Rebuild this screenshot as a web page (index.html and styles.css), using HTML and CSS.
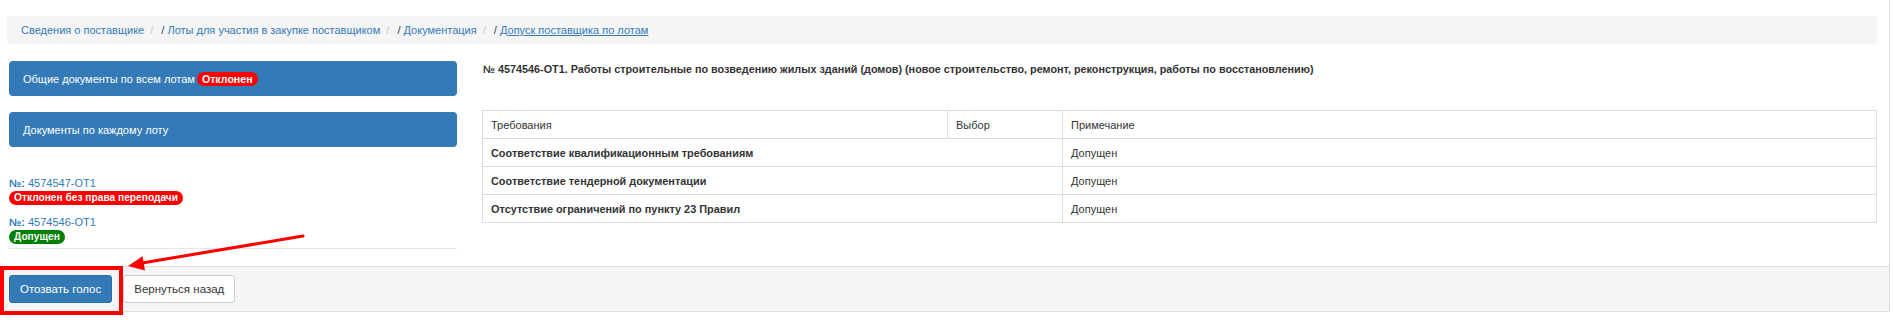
FILE: index.html
```html
<!DOCTYPE html>
<html lang="ru">
<head>
  <meta charset="UTF-8">
  <title>Допуск поставщика по лотам</title>
  <link rel="stylesheet" href="styles.css">
</head>
<body>

<div class="panel">
  <ol class="breadcrumb">
    <li><a href="#">Сведения о поставщике</a></li>
    <li><span class="slash">/</span> <a href="#">Лоты для участия в закупке поставщиком</a></li>
    <li><span class="slash">/</span> <a href="#">Документация</a></li>
    <li><span class="slash">/</span> <a href="#" class="current">Допуск поставщика по лотам</a></li>
  </ol>

  <div class="panel-body">
    <div class="side">
      <a href="#" class="doc-btn">Общие документы по всем лотам <span class="badge red">Отклонен</span></a>
      <a href="#" class="doc-btn">Документы по каждому лоту</a>

      <div class="lots">
        <div class="lot">
          <a href="#" class="lot-no"><b>№:</b> 4574547-OT1</a>
          <span class="badge red">Отклонен без права переподачи</span>
        </div>
        <div class="lot">
          <a href="#" class="lot-no"><b>№:</b> 4574546-OT1</a>
          <span class="badge green">Допущен</span>
        </div>
      </div>
      <hr>
    </div>

    <div class="main">
      <h4 class="lot-title">№ 4574546-OT1. Работы строительные по возведению жилых зданий (домов) (новое строительство, ремонт, реконструкция, работы по восстановлению)</h4>
      <table class="req">
        <thead>
          <tr>
            <th class="c1">Требования</th>
            <th class="c2">Выбор</th>
            <th>Примечание</th>
          </tr>
        </thead>
        <tbody>
          <tr>
            <td colspan="2" class="name">Соответствие квалификационным требованиям</td>
            <td>Допущен</td>
          </tr>
          <tr>
            <td colspan="2" class="name">Соответствие тендерной документации</td>
            <td>Допущен</td>
          </tr>
          <tr>
            <td colspan="2" class="name">Отсутствие ограничений по пункту 23 Правил</td>
            <td>Допущен</td>
          </tr>
        </tbody>
      </table>
    </div>
  </div>

  <div class="panel-footer">
    <button class="btn primary">Отозвать голос</button>
    <button class="btn">Вернуться назад</button>
  </div>
</div>

<!-- пометка на скриншоте -->
<div class="mark-box"></div>
<svg class="mark-arrow" width="320" height="320" viewBox="0 0 320 320">
  <line x1="303" y1="236" x2="142" y2="263" stroke="#f00" stroke-width="3" stroke-linecap="round"/>
  <polygon points="128,266 145,270.5 142.5,256.2" fill="#f00"/>
</svg>

</body>
</html>
```

FILE: styles.css
```css
body {
  margin: 0;
  font-family: "Liberation Sans", Arial, sans-serif;
  font-size: 11px;
  color: #333;
  background: #fff;
}

a {
  color: #337ab7;
  text-decoration: none;
}

.panel {
  width: 1890px;
  box-sizing: border-box;
  padding-top: 16px;
  border-right: 1px solid #ddd;
  border-bottom: 1px solid #ddd;
}

.breadcrumb {
  display: flex;
  list-style: none;
  margin: 0 12px 0 7px;
  padding: 0 14px;
  height: 28px;
  line-height: 28px;
  background: #f5f5f5;
  border-radius: 4px;
}

.breadcrumb li + li:before {
  content: "/\00a0";
  padding: 0 5px 0 6px;
  color: #ccc;
}

.breadcrumb .slash {
  color: #1d3f66;
}

.breadcrumb .current {
  text-decoration: underline;
}

.panel-body {
  display: grid;
  grid-template-columns: 448px 1fr;
  column-gap: 25px;
  padding: 0 12px 0 9px;
}

.side {
  padding-top: 17px;
}

.doc-btn {
  display: flex;
  align-items: center;
  height: 35px;
  padding: 0 14px;
  margin-bottom: 16px;
  background: #337ab7;
  color: #fff;
  border-radius: 4px;
}

.doc-btn .badge {
  margin-left: 2px;
  font-size: 10.6px;
}

.badge {
  display: inline-block;
  height: 14px;
  line-height: 14px;
  padding: 0 5px;
  border-radius: 7px;
  font-size: 10.2px;
  font-weight: bold;
  color: #fff;
}

.badge.red {
  background: #f00;
}

.badge.green {
  background: #008000;
}

.lots {
  padding-top: 13px;
}

.lot {
  margin-bottom: 10px;
}

.lot-no {
  display: block;
  line-height: 14px;
  margin-bottom: 1px;
}

.side hr {
  margin: -6px 0 17px;
  border: 0;
  border-top: 1px solid #e5e5e5;
}

.main {
  padding-top: 18px;
}

.lot-title {
  margin: 0 0 34px 1px;
  font-size: 10.8px;
  line-height: 14px;
  font-weight: bold;
  color: #333;
}

.req {
  width: 100%;
  border-collapse: collapse;
}

.req th,
.req td {
  height: 27px;
  padding: 0 8px;
  border: 1px solid #ddd;
  text-align: left;
  font-weight: normal;
}

.req .c1 {
  width: 448px;
}

.req .c2 {
  width: 98px;
}

.req td.name {
  font-weight: bold;
  font-size: 10.9px;
}

.panel-footer {
  display: flex;
  gap: 11px;
  height: 44px;
  align-items: center;
  padding: 0 9px;
  background: #f5f5f5;
  border-top: 1px solid #ddd;
}

.btn {
  height: 28px;
  padding: 0 10px;
  font-family: inherit;
  font-size: 11.5px;
  color: #333;
  background: #fff;
  border: 1px solid #ccc;
  border-radius: 3px;
}

.btn.primary {
  color: #fff;
  background: #337ab7;
  border-color: #2e6da4;
}

.mark-box {
  position: absolute;
  left: 0;
  top: 266px;
  width: 123px;
  height: 49px;
  box-sizing: border-box;
  border: 4px solid #f00;
}

.mark-arrow {
  position: absolute;
  left: 0;
  top: 0;
  pointer-events: none;
}
```
